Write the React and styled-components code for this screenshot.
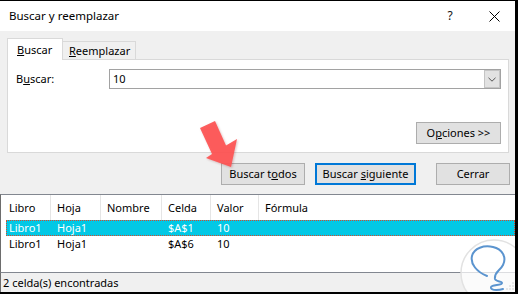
import React from "react";
import styled, { createGlobalStyle, css } from "styled-components";

const Global = createGlobalStyle`
  html, body { margin: 0; padding: 0; background: #fff; }
  body {
    font-family: "Noto Sans", "Segoe UI", sans-serif;
    font-size: 11px;
    color: #000;
  }
  * { box-sizing: border-box; }
`;

const Window = styled.div`
  position: relative;
  width: 518px;
  height: 294px;
  border-top: 1px solid #000;
  border-right: 3px solid #000;
  border-bottom: 2px solid #000;
  background: #f0f0f0;
  display: flex;
  flex-direction: column;
  overflow: hidden;
  line-height: 14px;
`;

const TitleBar = styled.div`
  height: 30px;
  flex-shrink: 0;
  background: #fff;
  display: flex;
  align-items: center;
`;

const Title = styled.div`
  flex: 1;
  padding-left: 9px;
  font-size: 11.5px;
`;

const TitleButton = styled.div`
  width: ${(p) => p.$w}px;
  height: 30px;
  display: flex;
  align-items: center;
  justify-content: center;
  font-size: 12px;
  color: #111;
`;

const Body = styled.div`
  display: flex;
  flex-direction: column;
  padding: 7px 5px 9px 7px;
  flex-shrink: 0;
`;

const TabStrip = styled.div`
  position: relative;
  z-index: 1;
  display: flex;
  align-items: flex-end;
  height: 21px;
`;

const Tab = styled.div`
  display: flex;
  align-items: center;
  padding-top: 1px;
  ${(p) =>
    p.$active
      ? css`
          width: 56px;
          height: 22px;
          margin-bottom: -1px;
          background: #fff;
          border: 1px solid #d9d9d9;
          border-bottom: none;
          padding-left: 9px;
        `
      : css`
          width: 73px;
          height: 18px;
          background: #f0f0f0;
          border: 1px solid #d9d9d9;
          border-left: none;
          border-bottom: none;
          padding-left: 6px;
        `}
`;

const Panel = styled.div`
  background: #fff;
  border: 1px solid #d9d9d9;
  margin-right: 1px;
  padding: 9px 7px 8px 8px;
  display: flex;
  flex-direction: column;
`;

const FieldRow = styled.div`
  display: flex;
  align-items: center;
  height: 20px;
`;

const Label = styled.div`
  width: 93px;
`;

const Combo = styled.div`
  flex: 1;
  height: 20px;
  border: 1px solid #a2a2a2;
  display: flex;
  background: #fff;
`;

const ComboText = styled.div`
  flex: 1;
  display: flex;
  align-items: center;
  padding-left: 3px;
`;

const ComboArrow = styled.div`
  width: 16px;
  background: #e2e2e2;
  border: 1px solid #c4c4c4;
  display: flex;
  align-items: center;
  justify-content: center;
`;

const OptionsRow = styled.div`
  display: flex;
  justify-content: flex-end;
  margin-top: 33px;
`;

const Button = styled.div`
  width: ${(p) => p.$w}px;
  height: 22px;
  margin-left: ${(p) => p.$gap || 0}px;
  display: flex;
  align-items: center;
  justify-content: center;
  background: #e1e1e1;
  border: ${(p) => (p.$primary ? "2px solid #0078d7" : "1px solid #adadad")};
  white-space: nowrap;
`;

const ButtonRow = styled.div`
  display: flex;
  justify-content: flex-end;
  margin-top: 10px;
`;

const List = styled.div`
  height: 79px;
  flex-shrink: 0;
  background: #fff;
  border-top: 1px solid #828790;
  border-bottom: 1px solid #828790;
  border-left: 1px solid #6d6d6d;
  display: flex;
  flex-direction: column;
`;

const Header = styled.div`
  display: grid;
  grid-template-columns: 50px 50px 61px 49px 48px 1fr;
  height: 25px;
`;

const HeaderCell = styled.div`
  display: flex;
  align-items: center;
  padding-left: ${(p) => (p.$first ? 8 : 6)}px;
  border-right: ${(p) => (p.$last ? "none" : "1px solid #e5e5e5")};
  white-space: nowrap;
`;

const Row = styled.div`
  display: grid;
  grid-template-columns: 44px 50px 61px 49px 48px 1fr;
  height: 16px;
  margin-left: 5px;
  border: 1px dotted ${(p) => (p.$selected ? "#d9482a" : "transparent")};
  background: ${(p) => (p.$selected ? "#02c8e5" : "transparent")};
  color: ${(p) => (p.$selected ? "#fff" : "#000")};
`;

const Cell = styled.div`
  display: flex;
  align-items: center;
  padding-left: ${(p) => (p.$first ? 2 : 6)}px;
  white-space: nowrap;
`;

const StatusBar = styled.div`
  flex: 1;
  display: flex;
  align-items: center;
  padding-left: 2px;
  border-left: 1px solid #6d6d6d;
`;

const StatusText = styled.div`
  flex: 1;
`;

const Grip = styled.svg`
  align-self: flex-end;
  margin-bottom: 1px;
`;

const ArrowOverlay = styled.svg`
  position: absolute;
  left: 195px;
  top: 114px;
  width: 48px;
  height: 58px;
  overflow: visible;
  pointer-events: none;
  filter: drop-shadow(1px 1px 1px rgba(120, 0, 0, 0.25));
`;

const Watermark = styled.svg`
  position: absolute;
  left: 458px;
  top: 236px;
  width: 72px;
  height: 72px;
  overflow: visible;
  pointer-events: none;
`;

const cols = [
  { key: "libro", label: "Libro" },
  { key: "hoja", label: "Hoja" },
  { key: "nombre", label: "Nombre" },
  { key: "celda", label: "Celda" },
  { key: "valor", label: "Valor" },
  { key: "formula", label: "Fórmula" },
];

const rows = [
  { libro: "Libro1", hoja: "Hoja1", nombre: "", celda: "$A$1", valor: "10", formula: "", selected: true },
  { libro: "Libro1", hoja: "Hoja1", nombre: "", celda: "$A$6", valor: "10", formula: "" },
];

export default function App() {
  return (
    <>
      <Global />
      <Window>
        <TitleBar>
          <Title>Buscar y reemplazar</Title>
          <TitleButton $w={46}>?</TitleButton>
          <TitleButton $w={42}>
            <svg width="11" height="11" viewBox="0 0 11 11">
              <path d="M0.5 0.5 L10.5 10.5 M10.5 0.5 L0.5 10.5" stroke="#000" strokeWidth="1" />
            </svg>
          </TitleButton>
        </TitleBar>

        <Body>
          <TabStrip>
            <Tab $active>
              <span>
                <u>B</u>uscar
              </span>
            </Tab>
            <Tab>
              <span>
                <u>R</u>eemplazar
              </span>
            </Tab>
          </TabStrip>
          <Panel>
            <FieldRow>
              <Label>
                B<u>u</u>scar:
              </Label>
              <Combo>
                <ComboText>10</ComboText>
                <ComboArrow>
                  <svg width="8" height="5" viewBox="0 0 8 5">
                    <path d="M0.5 0.8 L4 4.2 L7.5 0.8" fill="none" stroke="#555" strokeWidth="1" />
                  </svg>
                </ComboArrow>
              </Combo>
            </FieldRow>
            <OptionsRow>
              <Button $w={85}>
                <span>
                  O<u>p</u>ciones &gt;&gt;
                </span>
              </Button>
            </OptionsRow>
          </Panel>
          <ButtonRow>
            <Button $w={84}>
              <span>
                Buscar t<u>o</u>dos
              </span>
            </Button>
            <Button $w={101} $gap={10} $primary>
              <span>
                Buscar <u>s</u>iguiente
              </span>
            </Button>
            <Button $w={74} $gap={20}>
              <span>Cerrar</span>
            </Button>
          </ButtonRow>
        </Body>

        <List>
          <Header>
            {cols.map((c, i) => (
              <HeaderCell key={c.key} $first={i === 0} $last={i === cols.length - 1}>
                {c.label}
              </HeaderCell>
            ))}
          </Header>
          {rows.map((r, ri) => (
            <Row key={ri} $selected={r.selected}>
              {cols.map((c, i) => (
                <Cell key={c.key} $first={i === 0}>
                  {r[c.key]}
                </Cell>
              ))}
            </Row>
          ))}
        </List>

        <StatusBar>
          <StatusText>2 celda(s) encontradas</StatusText>
          <Grip width="10" height="10" viewBox="0 0 10 10">
            {[
              [8, 2], [8, 5], [8, 8], [5, 5], [5, 8], [2, 8],
            ].map(([x, y], i) => (
              <rect key={i} x={x - 1} y={y - 1} width="2" height="2" fill="#a8a8a8" />
            ))}
          </Grip>
        </StatusBar>

        <ArrowOverlay viewBox="0 0 48 58">
          <g transform="translate(-195,-115)">
            <polygon
              points="200,128 215,121 226,145.5 237,139 231,167 206,158 212,154"
              fill="#fe5353"
              opacity="0.93"
            />
          </g>
        </ArrowOverlay>

        <Watermark viewBox="0 0 72 72">
          <g transform="translate(-458,-237)">
            <circle cx="494" cy="273" r="33" fill="rgba(255,255,255,0.72)" stroke="#e2e2e2" strokeWidth="1.5" />
            <path
              d="M487 276 C477 272 470 264 472 256 C474 248 484 245 493 247 C502 249 507 257 503 265 C500 271 494 272 495 279 C496 282 502 281 502 283 C502 286 490 284 491 288 C492 291 500 290 503 289"
              fill="none"
              stroke="#5b94cf"
              strokeWidth="2"
              strokeLinecap="round"
              strokeLinejoin="round"
            />
          </g>
        </Watermark>
      </Window>
    </>
  );
}
